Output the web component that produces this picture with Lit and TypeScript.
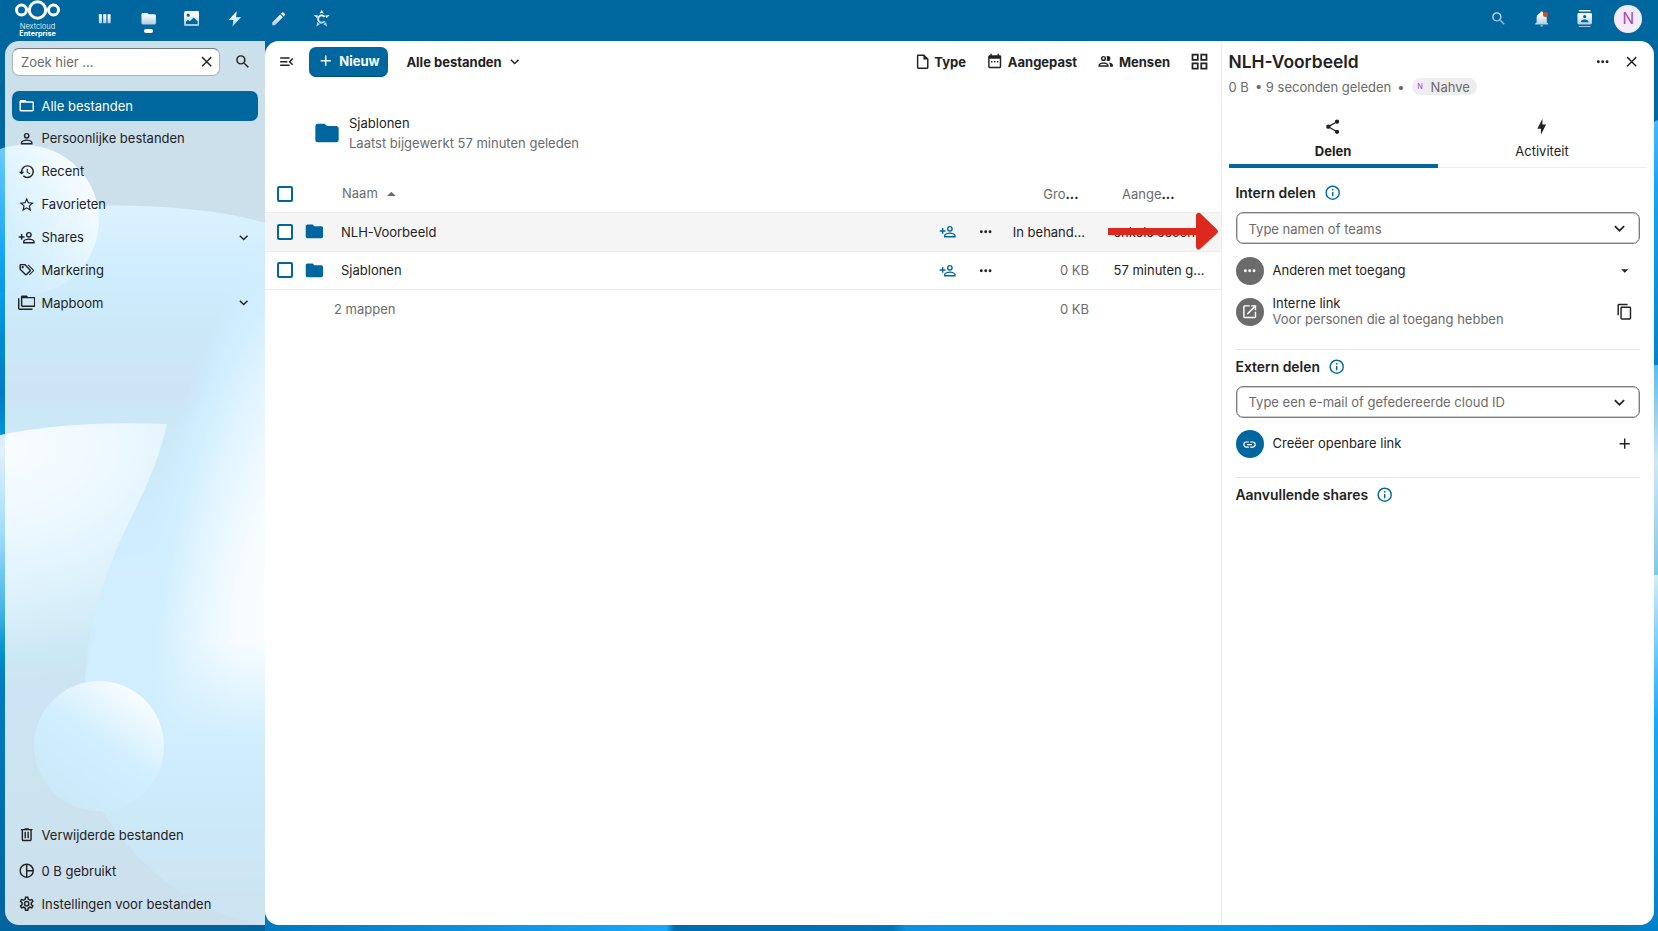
import {LitElement, html, css, svg, nothing} from "lit";
import {customElement, property} from "lit/decorators.js";
import {classMap} from "lit/directives/class-map.js";

const ICONS: Record<string, string> = {
    magnify: "M9.5,3A6.5,6.5 0 0,1 16,9.5C16,11.11 15.41,12.59 14.44,13.73L14.71,14H15.5L20.5,19L19,20.5L14,15.5V14.71L13.73,14.44C12.59,15.41 11.11,16 9.5,16A6.5,6.5 0 0,1 3,9.5A6.5,6.5 0 0,1 9.5,3M9.5,5C7,5 5,7 5,9.5C5,12 7,14 9.5,14C12,14 14,12 14,9.5C14,7 12,5 9.5,5Z",
    close: "M19,6.41L17.59,5L12,10.59L6.41,5L5,6.41L10.59,12L5,17.59L6.41,19L12,13.41L17.59,19L19,17.59L13.41,12L19,6.41Z",
    folder: "M10,4H4C2.89,4 2,4.89 2,6V18A2,2 0 0,0 4,20H20A2,2 0 0,0 22,18V8C22,6.89 21.1,6 20,6H12L10,4Z",
    folderOutline: "M20,18H4V8H20M20,6H12L10,4H4C2.89,4 2,4.89 2,6V18A2,2 0 0,0 4,20H20A2,2 0 0,0 22,18V8C22,6.89 21.1,6 20,6Z",
    account: "M12,4A4,4 0 0,1 16,8A4,4 0 0,1 12,12A4,4 0 0,1 8,8A4,4 0 0,1 12,4M12,6A2,2 0 0,0 10,8A2,2 0 0,0 12,10A2,2 0 0,0 14,8A2,2 0 0,0 12,6M12,13C14.67,13 20,14.33 20,17V20H4V17C4,14.33 9.33,13 12,13M12,14.9C9.03,14.9 5.9,16.36 5.9,17V18.1H18.1V17C18.1,16.36 14.97,14.9 12,14.9Z",
    history: "M13.5,8H12V13L16.28,15.54L17,14.33L13.5,12.25V8M13,3A9,9 0 0,0 4,12H1L4.96,16.03L9,12H6A7,7 0 0,1 13,5A7,7 0 0,1 20,12A7,7 0 0,1 13,19C11.07,19 9.32,18.21 8.06,16.94L6.64,18.36C8.27,20 10.5,21 13,21A9,9 0 0,0 22,12A9,9 0 0,0 13,3",
    star: "M12,15.39L8.24,17.66L9.23,13.38L5.91,10.5L10.29,10.13L12,6.09L13.71,10.13L18.09,10.5L14.77,13.38L15.76,17.66M22,9.24L14.81,8.63L12,2L9.19,8.63L2,9.24L7.45,13.97L5.82,21L12,17.27L18.18,21L16.54,13.97L22,9.24Z",
    accountPlus: "M15,4A4,4 0 0,0 11,8A4,4 0 0,0 15,12A4,4 0 0,0 19,8A4,4 0 0,0 15,4M15,5.9C16.16,5.9 17.1,6.84 17.1,8C17.1,9.16 16.16,10.1 15,10.1A2.1,2.1 0 0,1 12.9,8A2.1,2.1 0 0,1 15,5.9M4,7V10H1V12H4V15H6V12H9V10H6V7H4M15,13C12.33,13 7,14.33 7,17V20H23V17C23,14.33 17.67,13 15,13M15,14.9C17.97,14.9 21.1,16.36 21.1,17V18.1H8.9V17C8.9,16.36 12,14.9 15,14.9Z",
    tags: "M6.5 10C7.3 10 8 9.3 8 8.5S7.3 7 6.5 7 5 7.7 5 8.5 5.7 10 6.5 10M9 6L16 13L11 18L4 11V6H9M9 4H4C2.9 4 2 4.9 2 6V11C2 11.6 2.2 12.1 2.6 12.4L9.6 19.4C9.9 19.8 10.4 20 11 20S12.1 19.8 12.4 19.4L17.4 14.4C17.8 14 18 13.5 18 13C18 12.4 17.8 11.9 17.4 11.6L10.4 4.6C10.1 4.2 9.6 4 9 4M13.5 5.7L14.5 4.7L21.4 11.6C21.8 12 22 12.5 22 13S21.8 14.1 21.4 14.4L16 19.8L15 18.8L20.7 13L13.5 5.7Z",
    folders: "M22,4H14L12,2H6A2,2 0 0,0 4,4V16A2,2 0 0,0 6,18H22A2,2 0 0,0 24,16V6A2,2 0 0,0 22,4M2,6H0V11H0V20A2,2 0 0,0 2,22H20V20H2V6M22,16H6V6H22",
    trash: "M9,3V4H4V6H5V19A2,2 0 0,0 7,21H17A2,2 0 0,0 19,19V6H20V4H15V3H9M7,6H17V19H7V6M9,8V17H11V8H9M13,8V17H15V8H13Z",
    pie: "M12,2A10,10 0 0,0 2,12A10,10 0 0,0 12,22A10,10 0 0,0 22,12A10,10 0 0,0 12,2M13,4.07C16.61,4.52 19.5,7.39 19.93,11H13V4.07M4,12C4,7.94 7.07,4.56 11,4.07V19.93C7.07,19.44 4,16.06 4,12M13,19.93V13H19.93C19.5,16.61 16.64,19.47 13,19.93Z",
    cog: "M12,8A4,4 0 0,1 16,12A4,4 0 0,1 12,16A4,4 0 0,1 8,12A4,4 0 0,1 12,8M12,10A2,2 0 0,0 10,12A2,2 0 0,0 12,14A2,2 0 0,0 14,12A2,2 0 0,0 12,10M10,22C9.75,22 9.54,21.82 9.5,21.58L9.13,18.93C8.5,18.68 7.96,18.34 7.44,17.94L4.95,18.95C4.73,19.03 4.46,18.95 4.34,18.73L2.34,15.27C2.21,15.05 2.27,14.78 2.46,14.63L4.57,12.97L4.5,12L4.57,11L2.46,9.37C2.27,9.22 2.21,8.95 2.34,8.73L4.34,5.27C4.46,5.05 4.73,4.96 4.95,5.05L7.44,6.05C7.96,5.66 8.5,5.32 9.13,5.07L9.5,2.42C9.54,2.18 9.75,2 10,2H14C14.25,2 14.46,2.18 14.5,2.42L14.87,5.07C15.5,5.32 16.04,5.66 16.56,6.05L19.05,5.05C19.27,4.96 19.54,5.05 19.66,5.27L21.66,8.73C21.79,8.95 21.73,9.22 21.54,9.37L19.43,11L19.5,12L19.43,13L21.54,14.63C21.73,14.78 21.79,15.05 21.66,15.27L19.66,18.73C19.54,18.95 19.27,19.04 19.05,18.95L16.56,17.95C16.04,18.34 15.5,18.68 14.87,18.93L14.5,21.58C14.46,21.82 14.25,22 14,22H10M11.25,4L10.88,6.61C9.68,6.86 8.62,7.5 7.85,8.39L5.44,7.35L4.69,8.65L6.8,10.2C6.4,11.37 6.4,12.64 6.8,13.8L4.68,15.36L5.43,16.66L7.86,15.62C8.63,16.5 9.68,17.14 10.87,17.38L11.24,20H12.76L13.13,17.39C14.32,17.14 15.37,16.5 16.14,15.62L18.57,16.66L19.32,15.36L17.2,13.81C17.6,12.64 17.6,11.37 17.2,10.2L19.31,8.65L18.56,7.35L16.15,8.39C15.38,7.5 14.32,6.86 13.12,6.62L12.75,4H11.25Z",
    chevron: "M7.41,8.58L12,13.17L16.59,8.58L18,10L12,16L6,10L7.41,8.58Z",
    menuOpen: "M21,15.61L19.59,17L14.58,12L19.59,7L21,8.39L17.44,12L21,15.61M3,6H16V8H3V6M3,13V11H13V13H3M3,18V16H16V18H3Z",
    plus: "M19,13H13V19H11V13H5V11H11V5H13V11H19V13Z",
    file: "M14,2H6A2,2 0 0,0 4,4V20A2,2 0 0,0 6,22H18A2,2 0 0,0 20,20V8L14,2M18,20H6V4H13V9H18V20Z",
    calendar: "M9,11H7V13H9V11M13,11H11V13H13V11M17,11H15V13H17V11M19,3H18V1H16V3H8V1H6V3H5C3.89,3 3,3.9 3,5V19A2,2 0 0,0 5,21H19A2,2 0 0,0 21,19V5A2,2 0 0,0 19,3M19,19H5V8H19V19Z",
    people: "M13.07 10.41A5 5 0 0 0 13.07 4.59A3.39 3.39 0 0 1 15 4A3.5 3.5 0 0 1 15 11A3.39 3.39 0 0 1 13.07 10.41M5.5 7.5A3.5 3.5 0 1 1 9 11A3.5 3.5 0 0 1 5.5 7.5M7.5 7.5A1.5 1.5 0 1 0 9 6A1.5 1.5 0 0 0 7.5 7.5M16 17V19H2V17S2 13 9 13 16 17 16 17M14 17C13.86 16.22 12.67 15 9 15S4.07 16.31 4 17M15.95 13A5.32 5.32 0 0 1 18 17V19H22V17S22 13.37 15.94 13Z",
    grid: "M3 11H11V3H3M5 5H9V9H5M13 21H21V13H13M15 15H19V19H15M3 21H11V13H3M5 15H9V19H5M13 3V11H21V3M19 9H15V5H19Z",
    dots: "M16,12A2,2 0 0,1 18,10A2,2 0 0,1 20,12A2,2 0 0,1 18,14A2,2 0 0,1 16,12M10,12A2,2 0 0,1 12,10A2,2 0 0,1 14,12A2,2 0 0,1 12,14A2,2 0 0,1 10,12M4,12A2,2 0 0,1 6,10A2,2 0 0,1 8,12A2,2 0 0,1 6,14A2,2 0 0,1 4,12Z",
    menuUp: "M7,15L12,10L17,15H7Z",
    menuDown: "M7,10L12,15L17,10H7Z",
    share: "M18,16.08C17.24,16.08 16.56,16.38 16.04,16.85L8.91,12.7C8.96,12.47 9,12.24 9,12C9,11.76 8.96,11.53 8.91,11.3L15.96,7.19C16.5,7.69 17.21,8 18,8A3,3 0 0,0 21,5A3,3 0 0,0 18,2A3,3 0 0,0 15,5C15,5.24 15.04,5.47 15.09,5.7L8.04,9.81C7.5,9.31 6.79,9 6,9A3,3 0 0,0 3,12A3,3 0 0,0 6,15C6.79,15 7.5,14.69 8.04,14.19L15.16,18.34C15.11,18.55 15.08,18.77 15.08,19C15.08,20.61 16.39,21.91 18,21.91C19.61,21.91 20.92,20.61 20.92,19A2.92,2.92 0 0,0 18,16.08Z",
    bolt: "M11 15H6L13 1V9H18L11 23V15Z",
    boltWide: "M14.5 0.5L2.5 13.5H9.5L8 23.5L21 9.5H13.5Z",
    info: "M11,9H13V7H11M12,20C7.59,20 4,16.41 4,12C4,7.59 7.59,4 12,4C16.41,4 20,7.59 20,12C20,16.41 16.41,20 12,20M12,2A10,10 0 0,0 2,12A10,10 0 0,0 12,22A10,10 0 0,0 22,12A10,10 0 0,0 12,2M11,17H13V11H11V17Z",
    openNew: "M14,3V5H17.59L7.76,14.83L9.17,16.24L19,6.41V10H21V3M19,19H5V5H12V3H5C3.89,3 3,3.9 3,5V19A2,2 0 0,0 5,21H19A2,2 0 0,0 21,19V12H19V19Z",
    copy: "M19,21H8V7H19M19,5H8A2,2 0 0,0 6,7V21A2,2 0 0,0 8,23H19A2,2 0 0,0 21,21V7A2,2 0 0,0 19,5M16,1H4A2,2 0 0,0 2,3V17H4V3H16V1Z",
    link: "M3.9,12C3.9,10.29 5.29,8.9 7,8.9H11V7H7A5,5 0 0,0 2,12A5,5 0 0,0 7,17H11V15.1H7C5.29,15.1 3.9,13.71 3.9,12M8,13H16V11H8V13M17,7H13V8.9H17C18.71,8.9 20.1,10.29 20.1,12C20.1,13.71 18.71,15.1 17,15.1H13V17H17A5,5 0 0,0 22,12A5,5 0 0,0 17,7Z",
    columns: "M1.5 4H7V20H3Q1.5 20 1.5 18.5ZM9.2 4H14.8V20H9.2ZM17 4H22.5V18.5Q22.5 20 21 20H17Z",
    image: "M3 0H21A3 3 0 0 1 24 3V21A3 3 0 0 1 21 24H3A3 3 0 0 1 0 21V3A3 3 0 0 1 3 0M6.5 4A2.5 2.5 0 1 0 6.5 9A2.5 2.5 0 0 0 6.5 4M3 20H21V16L15 10L9 16L6 13.500L3 16.500Z",
    pencil: "M20.71,7.04C21.1,6.65 21.1,6 20.71,5.63L18.37,3.29C18,2.9 17.35,2.9 16.96,3.29L15.12,5.12L18.87,8.87M3,17.25V21H6.75L17.81,9.93L14.06,6.18L3,17.25Z",
    bell: "M21,19V20H3V19L5,17V11C5,7.9 7.03,5.17 10,4.29C10,4.19 10,4.1 10,4A2,2 0 0,1 12,2A2,2 0 0,1 14,4C14,4.1 14,4.19 14,4.29C16.97,5.17 19,7.9 19,11V17L21,19M14,21A2,2 0 0,1 12,23A2,2 0 0,1 10,21",
    contacts: "M20,0H4V2H20V0M4,24H20V22H4V24M20,4H4A2,2 0 0,0 2,6V18A2,2 0 0,0 4,20H20A2,2 0 0,0 22,18V6A2,2 0 0,0 20,4M12,6.75A2.25,2.25 0 0,1 14.25,9A2.25,2.25 0 0,1 12,11.25A2.25,2.25 0 0,1 9.75,9A2.25,2.25 0 0,1 12,6.75M17,17H7V15.5C7,13.83 10.33,13 12,13C13.67,13 17,13.83 17,15.5V17Z"
};

const icon = (name: string, size = 17.4) => svg`
    <svg viewBox="0 0 24 24" width=${size} height=${size} fill="currentColor">
        <path fill-rule="evenodd" d=${ICONS[name]}></path>
    </svg>`;

const base = css`
    :host {
        display: block;
        box-sizing: border-box;
        font-family: Inter, "Liberation Sans", sans-serif;
        font-size: 13px;
        line-height: 20px;
        color: #222;
    }
    *, *::before, *::after { box-sizing: border-box; }
    svg { display: block; flex: none; }
`;

@customElement("cloud-backdrop")
export class CloudBackdrop extends LitElement {
    static styles = css`
        :host { display: block; }
        svg { display: block; }
    `;

    render() {
        return html`
            <svg width="1658" height="931" viewBox="0 0 1658 931">
                <defs>
                    <linearGradient id="orb" x1="1" y1="0.25" x2="0.1" y2="0.85">
                        <stop offset="0" stop-color="#e4f4ff"></stop>
                        <stop offset="0.45" stop-color="#58c2ff"></stop>
                        <stop offset="0.75" stop-color="#14a4f4"></stop>
                        <stop offset="1" stop-color="#008cd2"></stop>
                    </linearGradient>
                    <linearGradient id="back" x1="0" y1="205" x2="0" y2="931" gradientUnits="userSpaceOnUse">
                        <stop offset="0" stop-color="#50bcff"></stop>
                        <stop offset="0.08" stop-color="#14a8f8"></stop>
                        <stop offset="0.18" stop-color="#008cd2"></stop>
                        <stop offset="0.26" stop-color="#007cc6"></stop>
                        <stop offset="0.31" stop-color="#0090d4"></stop>
                        <stop offset="0.5" stop-color="#14aafa"></stop>
                        <stop offset="0.74" stop-color="#14aafa"></stop>
                        <stop offset="0.84" stop-color="#008fd4"></stop>
                        <stop offset="1" stop-color="#0070b4"></stop>
                    </linearGradient>
                    <radialGradient id="glow" gradientUnits="userSpaceOnUse" cx="0" cy="0" r="1"
                        gradientTransform="translate(278 600) rotate(10) scale(140 430)">
                        <stop offset="0" stop-color="#ecf7ff"></stop>
                        <stop offset="0.3" stop-color="#d2ecff"></stop>
                        <stop offset="0.6" stop-color="#70ccff"></stop>
                        <stop offset="0.85" stop-color="#14aafa"></stop>
                        <stop offset="1" stop-color="#14aafa" stop-opacity="0"></stop>
                    </radialGradient>
                    <linearGradient id="fade" x1="0" y1="640" x2="0" y2="931" gradientUnits="userSpaceOnUse">
                        <stop offset="0" stop-color="#14aafa" stop-opacity="0"></stop>
                        <stop offset="0.35" stop-color="#14a8f8"></stop>
                        <stop offset="0.6" stop-color="#0092d8"></stop>
                        <stop offset="1" stop-color="#0070b4"></stop>
                    </linearGradient>
                    <radialGradient id="front" gradientUnits="userSpaceOnUse" cx="0" cy="0" r="1"
                        gradientTransform="translate(5 450) rotate(-6) scale(340 235)">
                        <stop offset="0" stop-color="#e0f1fc"></stop>
                        <stop offset="0.35" stop-color="#a0dcff"></stop>
                        <stop offset="0.65" stop-color="#4cb8e8"></stop>
                        <stop offset="0.9" stop-color="#0090d0"></stop>
                        <stop offset="1" stop-color="#0080c6"></stop>
                    </radialGradient>
                    <linearGradient id="frontFade" x1="0" y1="620" x2="0" y2="925" gradientUnits="userSpaceOnUse">
                        <stop offset="0" stop-color="#007cc2" stop-opacity="0"></stop>
                        <stop offset="0.35" stop-color="#0078be"></stop>
                        <stop offset="1" stop-color="#00649e"></stop>
                    </linearGradient>
                    <linearGradient id="ball" x1="0.85" y1="0.1" x2="0.25" y2="0.95">
                        <stop offset="0" stop-color="#e4f4ff"></stop>
                        <stop offset="0.5" stop-color="#14aafa"></stop>
                        <stop offset="1" stop-color="#0090d4"></stop>
                    </linearGradient>
                    <linearGradient id="right" x1="0" y1="122" x2="0" y2="931" gradientUnits="userSpaceOnUse">
                        <stop offset="0" stop-color="#48b8fc"></stop>
                        <stop offset="0.08" stop-color="#14a6fa"></stop>
                        <stop offset="0.3" stop-color="#0084cc"></stop>
                        <stop offset="0.3" stop-color="#5cbce8"></stop>
                        <stop offset="0.42" stop-color="#cfe8f8"></stop>
                        <stop offset="0.56" stop-color="#80c8e8"></stop>
                        <stop offset="0.56" stop-color="#d4ecfa"></stop>
                        <stop offset="0.74" stop-color="#14aafe"></stop>
                        <stop offset="1" stop-color="#0080c8"></stop>
                    </linearGradient>
                    <linearGradient id="bottom" x1="265" y1="0" x2="1658" y2="0" gradientUnits="userSpaceOnUse">
                        <stop offset="0" stop-color="#0078c0"></stop>
                        <stop offset="0.288" stop-color="#18a8fa"></stop>
                        <stop offset="0.294" stop-color="#006cb0"></stop>
                        <stop offset="0.45" stop-color="#0074ba"></stop>
                        <stop offset="0.46" stop-color="#0c90e0"></stop>
                        <stop offset="0.7" stop-color="#0098e8"></stop>
                        <stop offset="0.97" stop-color="#007cba"></stop>
                        <stop offset="1" stop-color="#0088d0"></stop>
                    </linearGradient>
                </defs>
                <rect width="1658" height="931" fill="#00679e"></rect>
                <path fill="url(#back)" d="M0 210Q60 204 110 205.500Q210 206 265 223V931H0Z"></path>
                <rect x="60" y="226" width="205" height="700" fill="url(#glow)"></rect>
                <rect x="60" y="640" width="205" height="291" fill="url(#fade)"></rect>
                <circle cx="24" cy="220" r="75" fill="url(#orb)"></circle>
                <path fill="url(#front)" d="M0 435Q70 420 167 424C156 470 146 486 122 537C100 586 84 640 84 700V780Q150 905 265 925V931H0Z"></path>
                <path fill="url(#frontFade)" d="M0 620H100C90 650 84 670 84 700V780Q150 905 265 925V931H0Z"></path>
                <circle cx="99" cy="746" r="65" fill="url(#ball)"></circle>
                <rect x="265" y="918" width="1393" height="13" fill="url(#bottom)"></rect>
                <path fill="url(#right)" d="M1640 128L1658 120V931H1640Z"></path>
            </svg>`;
    }
}

@customElement("top-bar")
export class TopBar extends LitElement {
    static styles = [base, css`
        :host {
            display: flex;
            justify-content: space-between;
            height: 40.500px;
            color: #fff;
        }
        .group { display: flex; align-items: center; height: 37px; }
        .logo { width: 61px; padding-left: 14px; margin-right: 22.500px; align-self: flex-start; }
        .brand {
            display: flex;
            flex-direction: column;
            align-items: center;
            margin-top: 2.500px;
            width: 47px;
            font-size: 7.500px;
            line-height: 7.500px;
            font-weight: 300;
        }
        .brand b { font-weight: 700; font-size: 7.200px; }
        .slot {
            width: 43.300px;
            display: grid;
            place-items: center;
            position: relative;
        }
        .slot svg {
            -webkit-mask-image: linear-gradient(#000 25%, rgba(0, 0, 0, .6));
            mask-image: linear-gradient(#000 25%, rgba(0, 0, 0, .6));
        }
        .active::after {
            content: "";
            position: absolute;
            top: 19.500px;
            width: 9px;
            height: 4px;
            border-radius: 2px;
            background: #fff;
        }
        .badge {
            position: absolute;
            left: 22.500px;
            top: 2px;
            width: 5px;
            height: 5px;
            border-radius: 50%;
            background: #d9481c;
        }
        .soft { opacity: .75; }
        .avatar {
            width: 28px;
            height: 28px;
            border-radius: 50%;
            background: #f4ebf6;
            color: #a04db0;
            font-size: 15.500px;
            line-height: 28px;
            text-align: center;
        }
        .right { padding-right: 8px; }
    `];

    render() {
        return html`
            <div class="group">
                <div class="logo">
                    <svg width="47" height="20" viewBox="0 0 47 20" fill="none" stroke="#fff" stroke-width="3">
                        <circle cx="23.500" cy="10" r="8.200"></circle>
                        <circle cx="7.500" cy="10" r="5"></circle>
                        <circle cx="39.500" cy="10" r="5"></circle>
                    </svg>
                    <div class="brand"><span>Nextcloud</span><b>Enterprise</b></div>
                </div>
                <div class="slot">${icon("columns", 13.5)}</div>
                <div class="slot active">${icon("folder")}</div>
                <div class="slot">${icon("image", 15.5)}</div>
                <div class="slot">${icon("boltWide", 16)}</div>
                <div class="slot">${icon("pencil")}</div>
                <div class="slot">
                    <svg width="17.400" height="17.400" viewBox="0 0 24 24" fill="#fff">
                        <path d="M9 5L12 0L15 5L12 4ZM1 7L7 7.500L5.500 11.500ZM23 7L17 7.500L18.500 11.500ZM4.500 23L6 16.500L9.500 19.500ZM19.500 23L18 16.500L14.500 19.500Z"></path>
                        <path fill="none" stroke="#fff" stroke-width="2.600" d="M16 9.500A5 5 0 1 0 16 15.500"></path>
                    </svg>
                </div>
            </div>
            <div class="group right">
                <div class="slot soft">${icon("magnify")}</div>
                <div class="slot">${icon("bell")}<span class="badge"></span></div>
                <div class="slot">${icon("contacts")}</div>
                <div class="slot"><div class="avatar">N</div></div>
            </div>`;
    }
}

interface NavEntry {
    icon: string;
    label: string;
    active?: boolean;
    expandable?: boolean;
}

@customElement("files-nav")
export class FilesNav extends LitElement {
    static styles = [base, css`
        :host {
            display: flex;
            flex-direction: column;
            width: 260px;
            padding: 7.500px 7px 6px;
            background: rgba(255, 255, 255, .8);
            border-radius: 14px 0 0 14px;
        }
        .search { display: flex; align-items: center; gap: 14px; margin-bottom: 14.500px; }
        .field {
            display: flex;
            align-items: center;
            justify-content: space-between;
            width: 208px;
            height: 28px;
            padding: 0 4px 0 8px;
            background: #fff;
            border: 1px solid #a9b3b9;
            border-top-color: #747b80;
            border-radius: 7px;
            color: #6b6b6b;
        }
        .field svg { color: #222; }
        .entry {
            display: flex;
            align-items: center;
            height: 30px;
            margin-bottom: 2.950px;
            border-radius: 7px;
        }
        .entry.active { background: #00679e; color: #fff; }
        .glyph { width: 29.500px; display: grid; place-items: center; }
        .label { flex: 1; }
        .arrow { margin-right: 6px; }
        .bottom { margin-top: auto; }
        .bottom .entry { margin: 0 0 2.900px; }
        .bottom .entry:first-child { margin-bottom: 6.500px; }
        .bottom .entry:last-child { margin: 0; }
    `];

    entries: NavEntry[] = [
        {icon: "folderOutline", label: "Alle bestanden", active: true},
        {icon: "account", label: "Persoonlijke bestanden"},
        {icon: "history", label: "Recent"},
        {icon: "star", label: "Favorieten"},
        {icon: "accountPlus", label: "Shares", expandable: true},
        {icon: "tags", label: "Markering"},
        {icon: "folders", label: "Mapboom", expandable: true}
    ];

    footer: NavEntry[] = [
        {icon: "trash", label: "Verwijderde bestanden"},
        {icon: "pie", label: "0 B gebruikt"},
        {icon: "cog", label: "Instellingen voor bestanden"}
    ];

    entry(e: NavEntry) {
        return html`
            <div class=${classMap({entry: true, active: !!e.active})}>
                <span class="glyph">${icon(e.icon)}</span>
                <span class="label">${e.label}</span>
                ${e.expandable ? html`<span class="arrow">${icon("chevron")}</span>` : nothing}
            </div>`;
    }

    render() {
        return html`
            <div class="search">
                <div class="field"><span>Zoek hier ...</span>${icon("close")}</div>
                ${icon("magnify")}
            </div>
            ${this.entries.map(e => this.entry(e))}
            <div class="bottom">${this.footer.map(e => this.entry(e))}</div>`;
    }
}

interface FileRow {
    name: string;
    size: string;
    modified: string;
    pending?: boolean;
}

@customElement("file-list")
export class FileList extends LitElement {
    static styles = [base, css`
        :host {
            flex: 1;
            min-width: 0;
            background: #fff;
            border-radius: 14px 0 0 14px;
        }
        .toolbar { display: flex; align-items: center; height: 30px; margin-top: 6px; padding: 0 11.500px 0 12.500px; font-weight: 700; }
        .toolbar > * { display: flex; align-items: center; }
        .new {
            height: 30px;
            width: 79px;
            margin: 0 18px 0 14.500px;
            padding-left: 8px;
            gap: 4.500px;
            border-radius: 7px;
            border-bottom: 1px solid #004d77;
            background: #00679e;
            color: #fff;
        }
        .crumb { gap: 4px; margin-right: auto; }
        .filter { gap: 4.500px; margin-left: 20px; }
        .crumb + .filter { gap: 3px; }
        .view { margin-left: 18.500px; }
        .recommended { display: flex; align-items: center; margin: 36.500px 0 22px 48px; gap: 8px; height: 40px; }
        .recommended svg { color: #00679e; }
        .muted { color: #6b6b6b; }
        .row {
            display: grid;
            grid-template-columns: 27.500px 37px 1fr 38px 38px 92px 124px;
            align-items: center;
            height: 38.500px;
            padding-left: 11.500px;
            border-bottom: 1px solid #ededed;
        }
        .head { height: 38px; color: #6b6b6b; }
        .head .name { display: flex; align-items: center; gap: 3px; padding-left: 1px; }
        .head i { font-style: normal; color: #222; font-weight: 700; }
        .selected { background: #f5f5f5; }
        .check { width: 16px; height: 16px; border: 2px solid #00679e; border-radius: 2px; background: #fff; }
        .folder { color: #00679e; }
        .act { display: grid; place-items: center; }
        .add { color: #00679e; }
        .size { text-align: right; padding-right: 8px; }
        .size.pending { padding-right: 12px; }
        .date { padding-left: 16.500px; white-space: nowrap; overflow: hidden; }
        .head .size { padding-right: 18.500px; }
        .head .date { padding-left: 25px; }
        .foot { border: 0; }
        .foot .name { margin-left: -7px; }
    `];

    rows: FileRow[] = [
        {name: "NLH-Voorbeeld", size: "In behand...", modified: "enkele secon...", pending: true},
        {name: "Sjablonen", size: "0 KB", modified: "57 minuten g..."}
    ];

    row(r: FileRow) {
        return html`
            <div class=${classMap({row: true, selected: !!r.pending})}>
                <span class="check"></span>
                <span class="folder">${icon("folder", 20.8)}</span>
                <span class="name">${r.name}</span>
                <span class="act add">${icon("accountPlus")}</span>
                <span class="act">${icon("dots")}</span>
                <span class=${classMap({size: true, pending: !!r.pending, muted: !r.pending})}>${r.size}</span>
                <span class="date">${r.modified}</span>
            </div>`;
    }

    render() {
        return html`
            <div class="toolbar">
                <span>${icon("menuOpen")}</span>
                <span class="new">${icon("plus")}Nieuw</span>
                <span class="crumb">Alle bestanden${icon("chevron")}</span>
                <span class="filter">${icon("file")}Type</span>
                <span class="filter">${icon("calendar")}Aangepast</span>
                <span class="filter">${icon("people")}Mensen</span>
                <span class="view">${icon("grid", 21)}</span>
            </div>
            <div class="recommended">
                ${icon("folder", 28)}
                <div>
                    <div>Sjablonen</div>
                    <div class="muted">Laatst bijgewerkt 57 minuten geleden</div>
                </div>
            </div>
            <div class="row head">
                <span class="check"></span><span></span>
                <span class="name">Naam ${icon("menuUp", 20.8)}</span>
                <span></span><span></span>
                <span class="size">Gro<i>...</i></span>
                <span class="date">Aange<i>...</i></span>
            </div>
            ${this.rows.map(r => this.row(r))}
            <div class="row foot muted">
                <span></span><span></span>
                <span class="name">2 mappen</span>
                <span></span><span></span>
                <span class="size">0 KB</span>
                <span></span>
            </div>`;
    }
}

@customElement("share-entry")
export class ShareEntry extends LitElement {
    @property() icon = "dots";
    @property() label = "";
    @property() detail = "";
    @property() action = "menuDown";
    @property({type: Boolean}) primary = false;

    static styles = [base, css`
        :host { display: flex; align-items: center; height: 41px; padding-right: 6px; }
        .bubble {
            display: grid;
            place-items: center;
            width: 28px;
            height: 28px;
            margin-right: 9px;
            border-radius: 50%;
            background: #6b6b6b;
            color: #fff;
        }
        .bubble.primary { background: #00679e; }
        .text { flex: 1; line-height: 15.600px; }
        .detail { color: #6b6b6b; }
    `];

    render() {
        return html`
            <span class=${classMap({bubble: true, primary: this.primary})}>${icon(this.icon, this.primary ? 15 : 17.4)}</span>
            <div class="text">
                <div>${this.label}</div>
                ${this.detail ? html`<div class="detail">${this.detail}</div>` : nothing}
            </div>
            ${icon(this.action)}`;
    }
}

@customElement("details-sidebar")
export class DetailsSidebar extends LitElement {
    static styles = [base, css`
        :host {
            width: 432.500px;
            padding: 6px 7px 0 6.500px;
            background: #fff;
            border-left: 1px solid #ededed;
            border-radius: 0 14px 14px 0;
        }
        .title { display: flex; align-items: center; height: 30px; padding-right: 6px; }
        h2 { flex: 1; margin: 0; font-size: 17.400px; font-weight: 600; }
        .title svg + svg { margin-left: 12px; }
        .meta { display: flex; align-items: center; gap: 6px; height: 20px; color: #6b6b6b; }
        .chip {
            display: flex;
            align-items: center;
            height: 17.500px;
            margin-left: 1px;
            padding: 0 7px 0 1px;
            border-radius: 9px;
            background: #ededed;
        }
        .mini {
            width: 15px;
            height: 15px;
            margin-right: 3px;
            border-radius: 50%;
            background: #f4ebf6;
            color: #a04db0;
            font-size: 7.500px;
            line-height: 15px;
            text-align: center;
        }
        .tabs { display: grid; grid-template-columns: 1fr 1fr; margin-top: 19px; }
        .tab {
            display: grid;
            justify-items: center;
            align-content: start;
            gap: 8px;
            height: 52px;
            padding-top: 2.500px;
            border-bottom: 1px solid #ededed;
        }
        .tab.active { border-bottom: 4px solid #00679e; font-weight: 700; }
        .tab span { line-height: 16px; }
        .body { padding: 0 7px; }
        h4 { display: flex; align-items: center; gap: 8px; height: 20px; margin: 0; font-size: 13.900px; font-weight: 600; }
        h4 svg { color: #00679e; }
        .select {
            display: flex;
            align-items: center;
            justify-content: space-between;
            height: 32px;
            padding: 1px 8.500px 0 12px;
            margin: 9px 0 6px;
            border: 1px solid #7d7d7d;
            box-shadow: inset 0 0 0 .5px #9a9a9a;
            border-radius: 7px;
            color: #6b6b6b;
        }
        .select svg { color: #222; }
        section { border-bottom: 1px solid #e4e4e4; padding-top: 7px; }
        .internal { height: 182px; padding-top: 15.500px; }
        .external { height: 128px; }
        section:last-child { border: 0; }
    `];

    heading(text: string) {
        return html`<h4>${text}${icon("info")}</h4>`;
    }

    select(placeholder: string) {
        return html`<div class="select">${placeholder}${icon("chevron", 21)}</div>`;
    }

    render() {
        return html`
            <div class="title"><h2>NLH-Voorbeeld</h2>${icon("dots")}${icon("close")}</div>
            <div class="meta">
                <span>0 B</span>
                <span>• 9 seconden geleden</span>
                <span>•</span>
                <span class="chip"><span class="mini">N</span>Nahve</span>
            </div>
            <div class="tabs">
                <div class="tab active">${icon("share")}<span>Delen</span></div>
                <div class="tab">${icon("bolt")}<span>Activiteit</span></div>
            </div>
            <div class="body">
                <section class="internal">
                    ${this.heading("Intern delen")}
                    ${this.select("Type namen of teams")}
                    <share-entry label="Anderen met toegang"></share-entry>
                    <share-entry icon="openNew" label="Interne link" detail="Voor personen die al toegang hebben" action="copy"></share-entry>
                </section>
                <section class="external">
                    ${this.heading("Extern delen")}
                    ${this.select("Type een e-mail of gefedereerde cloud ID")}
                    <share-entry icon="link" label="Creëer openbare link" action="plus" primary></share-entry>
                </section>
                <section>
                    ${this.heading("Aanvullende shares")}
                </section>
            </div>`;
    }
}

@customElement("app-root")
export class AppRoot extends LitElement {
    static styles = [base, css`
        :host {
            display: grid;
            width: 1658px;
            height: 931px;
            overflow: hidden;
            position: relative;
        }
        cloud-backdrop, .page { grid-area: 1 / 1; }
        .page { display: flex; flex-direction: column; position: relative; }
        .panes { display: flex; flex: 1; margin: 0 4.500px 6px 5px; }
        .pointer { position: absolute; left: 1107px; top: 212px; }
    `];

    render() {
        return html`
            <cloud-backdrop></cloud-backdrop>
            <div class="page">
                <top-bar></top-bar>
                <div class="panes">
                    <files-nav></files-nav>
                    <file-list></file-list>
                    <details-sidebar></details-sidebar>
                </div>
            </div>
            <svg class="pointer" width="112" height="39" viewBox="0 0 112 39" fill="#dc291e">
                <path d="M1 16H89V3Q90 0 93 1L110 17.500Q112 19.500 110 21.500L93 37Q90 39 89 35V23H1Z"></path>
            </svg>`;
    }
}
